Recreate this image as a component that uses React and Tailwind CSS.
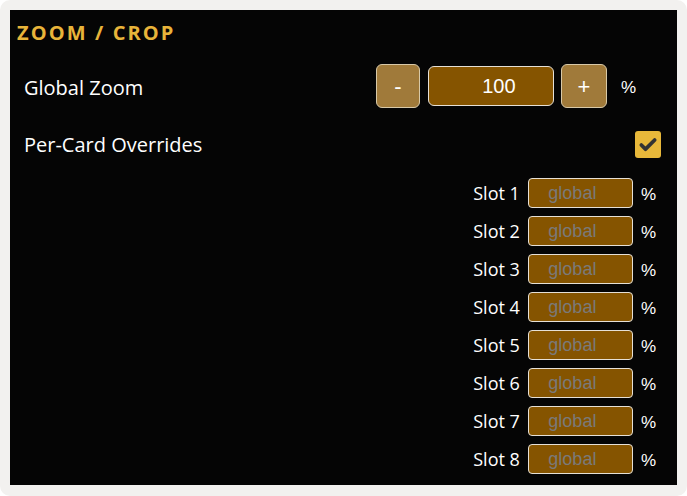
import { Check } from "lucide-react";

const slots = [1, 2, 3, 4, 5, 6, 7, 8];

const App = () => {
  return (
    <div className="w-[687px] h-[496px] bg-white">
      <div className="h-full rounded-[10px] bg-[#f2f1ef] p-[10px] pb-[11px]">
        <div
          className="h-full bg-[#050505] text-white"
          style={{ fontFamily: '"Open Sans", "Noto Sans", sans-serif' }}
        >
          {/* TITLE */}
          <div className="pl-[7px] pt-[10px] h-[44px] text-[20px] font-bold tracking-[2.1px] leading-[26px] text-[#e8b43a]">
            ZOOM / CROP
          </div>

          {/* GLOBAL ZOOM */}
          <div className="flex items-center justify-between pl-[14px] pr-[41px] h-[44px] mt-[10px]">
            <span className="text-[20px] pt-[3px]">Global Zoom</span>
            <div
              className="flex items-center"
              style={{ fontFamily: '"Liberation Sans", Arial, sans-serif' }}
            >
              <button className="w-[44px] h-[44px] rounded-[6px] border border-[#d8c9a8] bg-[#a07a3a] text-[22px] text-white">
                -
              </button>
              <div className="ml-[8px] w-[126px] h-[40px] rounded-[6px] border border-[#e6e0d6] bg-[#855400] flex items-center justify-center pl-[16px] text-[20px]">
                100
              </div>
              <button className="ml-[7px] w-[46px] h-[44px] rounded-[6px] border border-[#d8c9a8] bg-[#a07a3a] text-[22px] text-white">
                +
              </button>
              <span className="ml-[14px] text-[17px] pt-[3px]">%</span>
            </div>
          </div>

          {/* PER-CARD */}
          <div className="flex items-center justify-between pl-[14px] pr-[16px] h-[27px] mt-[23px]">
            <span className="text-[20px]">Per-Card Overrides</span>
            <div className="w-[26px] h-[27px] rounded-[3px] bg-[#e8b83a] flex items-center justify-center">
              <Check size={20} strokeWidth={4.5} color="#333333" />
            </div>
          </div>

          {/* SLOTS */}
          <div className="flex flex-col items-end pr-[21px] mt-[20px] gap-[8px]">
            {slots.map((n) => (
              <div key={n} className="flex items-center h-[30px]">
                <span className="text-[18px] mr-[8px]">Slot {n}</span>
                <input
                  placeholder="global"
                  className="w-[105px] h-[30px] rounded-[4px] border border-[#e6e0d6] bg-[#855400] text-center pr-[16px] text-[18px] placeholder:text-[#7a7a7a] outline-none"
                  style={{ fontFamily: '"Liberation Sans", Arial, sans-serif' }}
                />
                <span
                  className="ml-[8px] text-[17px] pt-[3px]"
                  style={{ fontFamily: '"Liberation Sans", Arial, sans-serif' }}
                >
                  %
                </span>
              </div>
            ))}
          </div>
        </div>
      </div>
    </div>
  );
};

export default App;
